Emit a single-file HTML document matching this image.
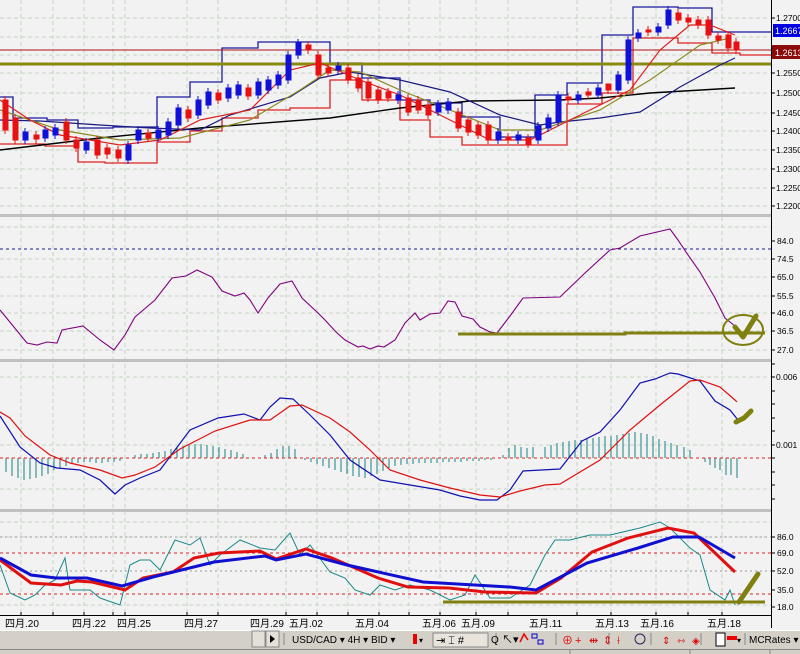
<!DOCTYPE html>
<html><head><meta charset="utf-8"><style>
html,body{margin:0;padding:0;width:800px;height:654px;overflow:hidden;background:#f2f2f2}
svg{display:block}
text{font-family:"Liberation Sans","Noto Sans CJK SC",sans-serif}
</style></head><body>
<svg width="800" height="654" viewBox="0 0 800 654" xmlns="http://www.w3.org/2000/svg">
<rect width="800" height="654" fill="#f2f2f2"/>
<!-- vertical grid -->
<g stroke="#c4d4c4" stroke-width="1" stroke-dasharray="4,3">
<path d="M21 0V612M53 0V612M84 0V612M113 0V612M125 0V612M187 0V612M218 0V612M286 0V612M317 0V612M348 0V612M379 0V612M409 0V612M440 0V612M476 0V612M508 0V612M577 0V612M611 0V612M656 0V612M688 0V612M722 0V612"/>
<path d="M0 18H771M0 37H771M0 55H771M0 73H771M0 93H771M0 113H771M0 131H771M0 150H771M0 169H771M0 188H771M0 206H771"/>
<path d="M0 227H771M0 259H771M0 277H771M0 296H771M0 313H771M0 331H771M0 350H771"/>
<path d="M0 377H771M0 445H771M0 489H771"/>
<path d="M0 522H771M0 537H771M0 605H771"/>
</g>
<!-- separators -->
<rect x="0" y="214" width="800" height="3" fill="#c0c0c0"/>
<rect x="0" y="359" width="800" height="3" fill="#c0c0c0"/>
<rect x="0" y="509" width="800" height="3" fill="#c0c0c0"/>

<!-- PANEL 1 -->
<path d="M0 97H13V118H47V120H78V128H113V127H157V97H190V82H222V48H258V42H290V42H330V63H362V78H400V100H430V103H462V117H500V137H535V95H567V83H602V35H633V7H678V8H712V32H771" fill="none" stroke="#1a1aa0" stroke-width="1.3"/>
<path d="M0 144H45V146H78V162H105V163H157V142H190V131H222V118H258V110H290V108H330V80H362V100H400V120H430V137H462V145H567V104H602V93H633V38H678V43H712V53H740V55H771" fill="none" stroke="#dd2222" stroke-width="1.3"/>
<path d="M0 50H771" stroke="#aa1111" stroke-width="1"/>
<path d="M0 64H771" stroke="#8a8a10" stroke-width="3"/>
<!-- MAs -->
<polyline fill="none" stroke="#000" stroke-width="1.4" points="0,150 100,138 200,128 330,118 400,108 470,101 560,100 600,98 650,93 735,88"/>
<polyline fill="none" stroke="#1a1a80" stroke-width="1.2" points="0,120 40,121 100,125 150,128 200,130 230,115 290,97 320,78 350,72 400,80 450,92 500,115 540,125 560,122 600,118 640,112 680,87 720,65 735,58"/>
<polyline fill="none" stroke="#8a8a20" stroke-width="1.2" points="0,110 60,130 120,140 180,138 250,120 300,90 330,70 360,72 400,90 450,110 500,130 540,130 600,110 650,80 700,45 730,38"/>
<polyline fill="none" stroke="#dd2020" stroke-width="1.2" points="0,100 30,120 60,135 120,145 160,140 200,120 250,110 290,70 320,63 360,80 400,95 450,120 490,140 530,140 560,125 600,105 630,90 660,50 690,25 710,25 735,35"/>
<!-- candles -->
<g stroke-width="1">
<g fill="#e81010" stroke="#e81010">
<path d="M5 96V134M15 114V144M36 131V144M66 118V144M76 136V152M97 136V159M107 144V159M118 146V162M148 129V142M188 106V122M218 89V104M248 84V100M308 41V54M318 51V79M328 64V77M348 64V84M358 74V92M368 78V102M378 86V104M388 88V102M408 94V116M418 96V114M428 101V119M458 108V132M468 116V136M478 121V139M488 121V144M508 133V144M528 134V148M568 93V104M588 88V99M608 86V94M648 26V36M678 9V24M688 14V26M698 16V29M708 16V39M718 32V44M728 31V52M736 38V54"/>
<rect x="3" y="100" width="5" height="30"/><rect x="13" y="118" width="5" height="22"/><rect x="34" y="135" width="5" height="4"/><rect x="64" y="122" width="5" height="18"/><rect x="74" y="140" width="5" height="8"/><rect x="95" y="140" width="5" height="15"/><rect x="105" y="148" width="5" height="6"/><rect x="116" y="150" width="5" height="8"/><rect x="146" y="133" width="5" height="5"/><rect x="186" y="110" width="5" height="8"/><rect x="216" y="93" width="5" height="7"/><rect x="246" y="88" width="5" height="8"/><rect x="306" y="45" width="5" height="5"/><rect x="316" y="55" width="5" height="20"/><rect x="326" y="68" width="5" height="5"/><rect x="346" y="68" width="5" height="12"/><rect x="356" y="78" width="5" height="10"/><rect x="366" y="82" width="5" height="16"/><rect x="376" y="90" width="5" height="10"/><rect x="386" y="92" width="5" height="6"/><rect x="406" y="98" width="5" height="14"/><rect x="416" y="100" width="5" height="10"/><rect x="426" y="105" width="5" height="10"/><rect x="456" y="112" width="5" height="16"/><rect x="466" y="120" width="5" height="12"/><rect x="476" y="125" width="5" height="10"/><rect x="486" y="125" width="5" height="15"/><rect x="506" y="137" width="5" height="3"/><rect x="526" y="138" width="5" height="6"/><rect x="566" y="97" width="5" height="3"/><rect x="586" y="92" width="5" height="3"/><rect x="606" y="84" width="5" height="6"/><rect x="646" y="30" width="5" height="2"/><rect x="676" y="13" width="5" height="7"/><rect x="686" y="18" width="5" height="4"/><rect x="696" y="20" width="5" height="5"/><rect x="706" y="20" width="5" height="15"/><rect x="716" y="36" width="5" height="4"/><rect x="726" y="35" width="5" height="13"/><rect x="734" y="42" width="5" height="8"/>
</g>
<g fill="#1010d8" stroke="#1010d8">
<path d="M25 128V144M45 126V142M55 124V139M86 138V154M128 141V164M138 126V144M158 126V142M168 118V139M178 104V129M198 96V119M208 88V109M228 84V102M238 81V99M258 78V99M268 76V94M278 71V89M288 51V84M298 39V59M338 62V74M398 91V104M438 100V116M448 98V114M498 128V144M518 131V144M538 122V144M548 114V132M558 91V126M578 91V104M598 84V99M618 71V94M628 36V84M638 29V42M658 23V36M668 6V29"/>
<rect x="23" y="132" width="5" height="8"/><rect x="43" y="130" width="5" height="8"/><rect x="53" y="128" width="5" height="7"/><rect x="84" y="142" width="5" height="8"/><rect x="126" y="145" width="5" height="15"/><rect x="136" y="130" width="5" height="10"/><rect x="156" y="130" width="5" height="8"/><rect x="166" y="122" width="5" height="13"/><rect x="176" y="108" width="5" height="17"/><rect x="196" y="100" width="5" height="15"/><rect x="206" y="92" width="5" height="13"/><rect x="226" y="88" width="5" height="10"/><rect x="236" y="85" width="5" height="10"/><rect x="256" y="82" width="5" height="13"/><rect x="266" y="80" width="5" height="10"/><rect x="276" y="75" width="5" height="10"/><rect x="286" y="55" width="5" height="25"/><rect x="296" y="43" width="5" height="12"/><rect x="336" y="66" width="5" height="4"/><rect x="396" y="95" width="5" height="5"/><rect x="436" y="104" width="5" height="8"/><rect x="446" y="102" width="5" height="8"/><rect x="496" y="132" width="5" height="8"/><rect x="516" y="135" width="5" height="5"/><rect x="536" y="126" width="5" height="14"/><rect x="546" y="118" width="5" height="10"/><rect x="556" y="95" width="5" height="27"/><rect x="576" y="95" width="5" height="5"/><rect x="596" y="88" width="5" height="7"/><rect x="616" y="75" width="5" height="15"/><rect x="626" y="40" width="5" height="40"/><rect x="636" y="33" width="5" height="5"/><rect x="656" y="27" width="5" height="5"/><rect x="666" y="10" width="5" height="15"/>
</g>
</g>

<!-- PANEL 2 RSI -->
<path d="M0 249H771" stroke="#1a1a90" stroke-width="1" stroke-dasharray="3,3"/>
<polyline fill="none" stroke="#800080" stroke-width="1.1" points="0,310 27,343 37,345 47,342 57,343 62,330 83,326 100,340 114,350 125,335 135,317 155,300 172,278 186,276 197,270 212,277 222,291 235,296 244,293 250,300 258,313 268,298 280,284 292,281 302,298 318,313 325,320 336,332 345,340 358,347 363,346 370,349 378,346 384,347 395,340 405,323 415,313 420,320 430,314 440,313 448,301 455,302 462,316 473,319 480,327 490,332 497,333 510,316 523,298 560,297 585,273 610,250 620,248 640,236 670,229 678,240 688,255 700,272 715,298 725,318 740,330"/>
<path d="M458 334H625V333H765" stroke="#808010" stroke-width="3" fill="none"/>
<ellipse cx="743" cy="330" rx="20" ry="15" fill="none" stroke="#808010" stroke-width="2"/>
<path d="M735 327L743 337L756 316" fill="none" stroke="#808010" stroke-width="5" stroke-linecap="round" stroke-linejoin="round"/>

<!-- PANEL 3 MACD -->
<g stroke="#1a8080" stroke-width="1">
<path d="M6 458V472M12 458V476M18 458V478M24 458V480M30 458V479M36 458V478M42 458V476M48 458V474M54 458V470M60 458V468M66 458V466M72 458V464M78 458V463M84 458V462M90 458V462M96 458V463M102 458V463M108 458V462M114 458V462M120 458V461M135 458V455M141 458V454M147 458V454M153 458V453M159 458V452M165 458V451M171 458V449M177 458V447M183 458V446M189 458V445M195 458V444M201 458V444M207 458V445M213 458V446M219 458V447M225 458V449M231 458V450M237 458V452M243 458V454M265 458V455M271 458V453M277 458V449M283 458V446M289 458V446M295 458V449M305 458V460M311 458V462M317 458V464M323 458V466M329 458V468M335 458V470M341 458V472M347 458V474M353 458V476M359 458V477M365 458V478M371 458V476M377 458V474M383 458V471M389 458V468M395 458V466M401 458V465M407 458V464M413 458V464M419 458V463M425 458V463M431 458V463M437 458V463M443 458V462M449 458V462M455 458V462M461 458V462M467 458V461M473 458V461M479 458V461M485 458V460M491 458V460M503 458V455M509 458V448M515 458V445M521 458V447M527 458V448M533 458V447M545 458V447M551 458V445M557 458V443M563 458V442M569 458V441M575 458V440M581 458V440M587 458V439M593 458V438M599 458V437M605 458V436M611 458V436M617 458V435M623 458V434M629 458V433M635 458V432M641 458V433M647 458V434M653 458V436M659 458V439M665 458V441M671 458V443M677 458V445M684 458V447M690 458V450M705 458V462M710 458V465M715 458V468M720 458V470M726 458V475M731 458V475M737 458V478"/>
</g>
<path d="M0 458H771" stroke="#dd2222" stroke-width="1" stroke-dasharray="3,3"/>
<polyline fill="none" stroke="#1010b0" stroke-width="1.2" points="0,416 20,447 40,463 57,468 80,470 100,480 115,494 125,485 140,478 160,470 190,430 218,418 244,414 260,420 270,407 280,398 293,399 310,415 330,435 350,460 380,480 410,485 440,490 460,496 480,500 497,500 510,490 523,471 560,469 582,441 600,432 620,410 640,383 655,379 670,373 678,374 700,381 715,401 730,410 738,420"/>
<polyline fill="none" stroke="#e01010" stroke-width="1.2" points="0,412 10,418 25,436 50,455 70,463 100,470 122,478 135,475 155,467 180,449 215,431 250,420 270,420 290,406 302,405 330,418 350,432 370,450 390,470 420,480 450,488 480,495 500,497 520,491 545,485 560,484 600,460 630,430 660,405 690,381 700,380 720,387 735,400 737,402"/>
<path d="M736 422L744 418L751 411" fill="none" stroke="#808010" stroke-width="5" stroke-linecap="round"/>

<!-- PANEL 4 -->
<path d="M0 553H771M0 594H771" stroke="#dd2222" stroke-width="1" stroke-dasharray="3,3"/>
<path d="M0 571H771M0 537H771" stroke="#999" stroke-width="1" stroke-dasharray="2,3"/>
<polyline fill="none" stroke="#1a8888" stroke-width="1" points="0,565 10,593 25,600 35,595 45,585 55,580 65,558 70,590 90,590 100,598 120,605 130,565 140,560 150,560 160,570 175,540 190,545 200,538 210,565 220,555 240,540 260,548 275,550 290,533 300,555 310,545 330,572 345,578 355,590 370,595 380,585 395,590 410,585 430,590 450,600 465,595 475,575 490,598 510,598 530,585 545,555 555,540 570,540 590,535 610,535 640,528 660,522 670,528 690,548 700,555 710,590 725,600 730,590 735,605"/>
<polyline fill="none" stroke="#e01010" stroke-width="3" points="0,560 31,583 61,585 77,581 92,582 125,590 143,578 173,572 194,558 219,553 260,551 276,559 306,549 332,558 378,578 408,587 449,588 485,592 536,593 561,578 592,552 628,538 668,528 694,533 714,552 735,572"/>
<polyline fill="none" stroke="#1010d0" stroke-width="3" points="0,558 31,575 56,578 87,578 122,586 153,577 214,562 265,556 276,560 306,554 347,565 423,582 510,587 536,590 587,563 638,548 673,537 699,537 735,558"/>
<path d="M443 602H765" stroke="#808010" stroke-width="3"/>
<path d="M739 602L758 574" stroke="#808010" stroke-width="5" stroke-linecap="round"/>

<!-- right axis -->
<rect x="772" y="0" width="28" height="615" fill="#f2f2f2"/>
<path d="M771.5 0V628" stroke="#000" stroke-width="1"/>
<g stroke="#000" stroke-width="1">
<path d="M771 18H775M771 73H775M771 93H775M771 113H775M771 131H775M771 150H775M771 169H775M771 188H775M771 206H775"/>
<path d="M771 241H775M771 259H775M771 277H775M771 296H775M771 313H775M771 331H775M771 350H775"/>
<path d="M771 364H775M771 377H775M771 391H775M771 404H775M771 418H775M771 431H775M771 445H775M771 458H775M771 472H775M771 485H775M771 499H775"/>
<path d="M771 537H775M771 553H775M771 571H775M771 590H775M771 607H775"/>
</g>
<g font-size="8.5" fill="#000">
<text x="776" y="21">1.2700</text><text x="776" y="76">1.2550</text><text x="776" y="96">1.2500</text><text x="776" y="116">1.2450</text><text x="776" y="134">1.2400</text><text x="776" y="153">1.2350</text><text x="776" y="172">1.2300</text><text x="776" y="191">1.2250</text><text x="776" y="209">1.2200</text>
<text x="777" y="244">84.0</text><text x="777" y="262">74.5</text><text x="777" y="280">65.0</text><text x="777" y="299">55.5</text><text x="777" y="316">46.0</text><text x="777" y="334">36.5</text><text x="777" y="353">27.0</text>
<text x="776" y="380">0.006</text><text x="776" y="448">0.001</text>
<text x="777" y="540">86.0</text><text x="777" y="556">69.0</text><text x="777" y="574">52.0</text><text x="777" y="593">35.0</text><text x="777" y="610">18.0</text>
</g>
<rect x="773" y="24" width="27" height="13" fill="#0000e0"/>
<text x="775" y="34" font-size="9" fill="#fff">1.2667</text>
<rect x="772" y="45" width="28" height="14" fill="#8b0a0a"/>
<text x="775" y="56" font-size="9" fill="#fff">1.2613</text>

<!-- date axis -->
<path d="M0 615.5H771" stroke="#000" stroke-width="1"/>
<g stroke="#000"><path d="M21 612V615M53 612V615M84 612V615M113 612V615M125 612V615M187 612V615M218 612V615M286 612V615M317 612V615M348 612V615M379 612V615M409 612V615M440 612V615M476 612V615M508 612V615M577 612V615M611 612V615M656 612V615M688 612V615M722 612V615"/></g>
<g font-size="10" fill="#000">
<text x="5" y="627">四月.20</text><text x="72" y="627">四月.22</text><text x="117" y="627">四月.25</text><text x="184" y="627">四月.27</text><text x="250" y="627">四月.29</text><text x="289" y="627">五月.02</text><text x="355" y="627">五月.04</text><text x="422" y="627">五月.06</text><text x="461" y="627">五月.09</text><text x="529" y="627">五月.11</text><text x="595" y="627">五月.13</text><text x="640" y="627">五月.16</text><text x="707" y="627">五月.18</text>
</g>

<!-- toolbar -->
<rect x="0" y="630" width="800" height="18" fill="#d4d0c8"/>
<path d="M0 630.5H800" stroke="#fff"/>
<rect x="252" y="631" width="13" height="16" fill="#e4e0d8" stroke="#888"/>
<rect x="266" y="631" width="13" height="16" fill="#e4e0d8" stroke="#888"/>
<path d="M270 635L275 639L270 643Z" fill="#000"/>
<path d="M284 633V645M438 633V645M496 633V645M556 633V645M609 633V645M651 633V645M701 633V645M745 633V645" stroke="#888"/>
<g font-size="10" fill="#000">
<text x="292" y="643">USD/CAD ▾  4H ▾  BID ▾</text>
<text x="491" y="643">Q</text>
<text x="749" y="643">MCRates ▾</text>
</g>
<rect x="413" y="634" width="4" height="10" fill="#e00"/><text x="419" y="643" font-size="8">▾</text>
<rect x="433" y="633" width="55" height="14" fill="#e8e4dc" stroke="#888"/>
<text x="436" y="644" font-size="11">⇥ ⌶ #</text>
<text x="502" y="643" font-size="11">↖▾</text>
<path d="M520 642L524 634L528 640" stroke="#e00" fill="none" stroke-width="1.5"/>
<rect x="532" y="634" width="5" height="4" fill="none" stroke="#00c"/><rect x="538" y="640" width="5" height="4" fill="none" stroke="#00c"/>
<g font-size="11" fill="#d00"><text x="562" y="644">⊕</text><text x="575" y="644">+</text><text x="589" y="644">⇹</text><text x="603" y="644">⇕</text><text x="617" y="644">⟊</text></g>
<circle cx="640" cy="639" r="5" fill="none" stroke="#225"/>
<g font-size="10" fill="#d00"><text x="662" y="644">⇕</text><text x="677" y="644">⇿</text><text x="692" y="644">◈</text></g>
<rect x="716" y="633" width="9" height="13" fill="#fff" stroke="#000"/>
<rect x="727" y="636" width="10" height="4" fill="#e00"/><text x="737" y="643" font-size="8">▾</text>
<!-- status bar -->
<rect x="0" y="648" width="800" height="6" fill="#d4d0c8"/>
<path d="M0 649.5H800" stroke="#888"/>
<path d="M570 650V654M690 650V654M770 650V654" stroke="#888"/>
</svg>
</body></html>
